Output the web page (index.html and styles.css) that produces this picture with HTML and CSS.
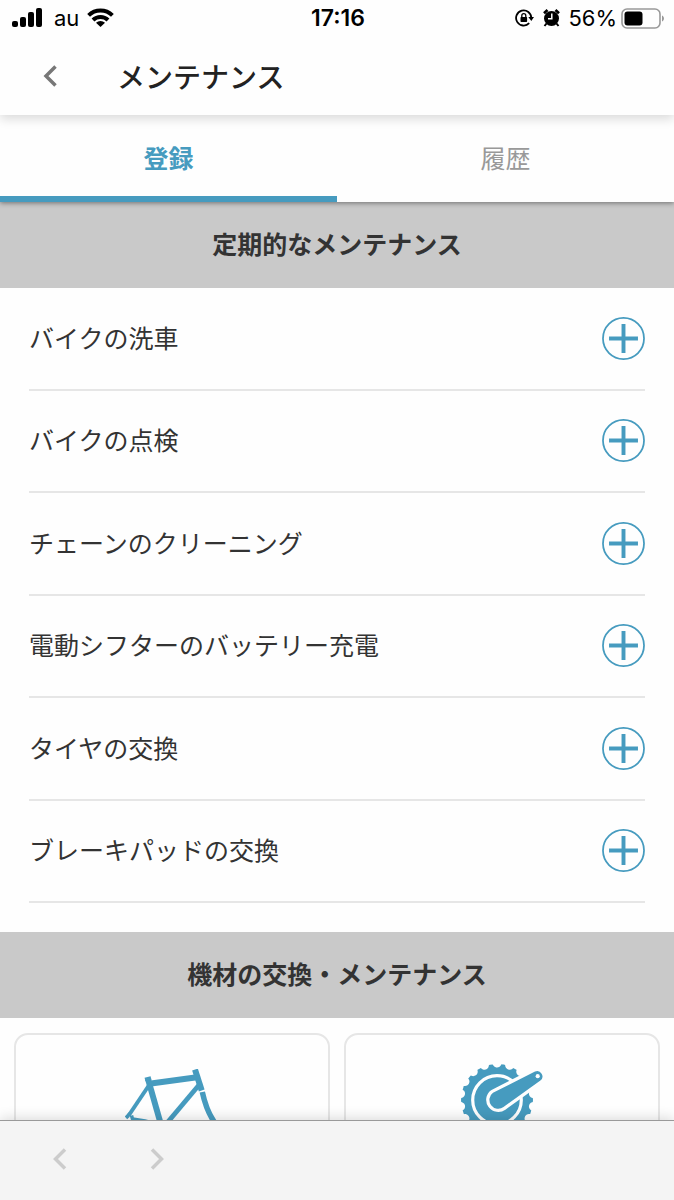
FILE: index.html
```html
<!DOCTYPE html>
<html lang="ja">
<head>
<meta charset="utf-8">
<meta name="viewport" content="width=device-width, initial-scale=1">
<title>メンテナンス</title>
<link rel="stylesheet" href="styles.css">
</head>
<body>
<div class="app">
  <header class="header">
    <div class="status">
      <div class="status-left">
        <svg width="30" height="20" viewBox="0 0 30 20" aria-hidden="true"><rect x="0" y="13" width="6" height="6" rx="2"/><rect x="8" y="9" width="6" height="10" rx="2"/><rect x="16" y="4" width="6" height="15" rx="2"/><rect x="24" y="0" width="6" height="19" rx="2"/></svg>
        <span>au</span>
        <svg width="27" height="20" viewBox="0 0 27 20" aria-hidden="true"><g fill="none" stroke="#000" stroke-width="4"><path d="M1.600 7.400a17 17 0 0 1 23.800 0"/><path d="M6 12a10.700 10.700 0 0 1 15 0"/></g><path d="M13.500 19 9 14.700a6.500 6.500 0 0 1 9 0z"/></svg>
      </div>
      <time class="clock">17:16</time>
      <div class="status-right">
        <svg class="lock" width="19" height="18" viewBox="0 0 19 18" aria-hidden="true"><path d="M14.200 14.200A7.600 7.600 0 1 1 16.300 9" fill="none" stroke="#000" stroke-width="1.800"/><path d="M13.300 8h5.700l-2.700 4z"/><rect x="5.500" y="8" width="6.600" height="5" rx=".7"/><path d="M6.800 8.500V6.700a2 2 0 0 1 4 0v1.800" fill="none" stroke="#000" stroke-width="1.300"/></svg>
        <svg class="alarm" width="17" height="18" viewBox="0 0 17 18" aria-hidden="true"><circle cx="8.500" cy="9.500" r="7.500"/><path d="M1 4.300 4.500 1M16 4.300 12.500 1" stroke="#000" stroke-width="2.600"/><path d="m3.500 14.500-2 2.500m12-2.500 2 2.500" stroke="#000" stroke-width="2"/><path d="M8.800 4.500v5.300H5" fill="none" stroke="#fff" stroke-width="1.500"/></svg>
        <span>56%</span>
        <svg width="43" height="21" viewBox="0 0 43 21" aria-hidden="true"><rect x="1" y="1" width="38" height="19" rx="5" fill="none" stroke="#999" stroke-width="1.600"/><rect x="3.500" y="3.500" width="18" height="14" rx="3"/><path d="M41 7.500c2.600 1 2.600 5 0 6z" fill="#999"/></svg>
      </div>
    </div>
    <div class="titlebar">
      <button class="back" aria-label="戻る"><svg width="14" height="22" viewBox="0 0 14 22" aria-hidden="true"><path d="M12.500 1.500 3 11l9.500 9.500" fill="none" stroke="currentColor" stroke-width="3.500"/></svg></button>
      <h1>メンテナンス</h1>
    </div>
  </header>
  <nav class="tabs" role="tablist">
    <button class="tab active" role="tab" aria-selected="true">登録</button>
    <button class="tab" role="tab" aria-selected="false">履歴</button>
  </nav>
  <main class="content">
    <h2 class="section">定期的なメンテナンス</h2>
    <ul class="list">
      <li><span id="r1">バイクの洗車</span><button class="add" aria-label="追加" aria-describedby="r1"><svg viewBox="0 0 44 44" aria-hidden="true"><use href="#plus"/></svg></button></li>
      <li><span id="r2">バイクの点検</span><button class="add" aria-label="追加" aria-describedby="r2"><svg viewBox="0 0 44 44" aria-hidden="true"><use href="#plus"/></svg></button></li>
      <li><span id="r3">チェーンのクリーニング</span><button class="add" aria-label="追加" aria-describedby="r3"><svg viewBox="0 0 44 44" aria-hidden="true"><use href="#plus"/></svg></button></li>
      <li><span id="r4">電動シフターのバッテリー充電</span><button class="add" aria-label="追加" aria-describedby="r4"><svg viewBox="0 0 44 44" aria-hidden="true"><use href="#plus"/></svg></button></li>
      <li><span id="r5">タイヤの交換</span><button class="add" aria-label="追加" aria-describedby="r5"><svg viewBox="0 0 44 44" aria-hidden="true"><use href="#plus"/></svg></button></li>
      <li><span id="r6">ブレーキパッドの交換</span><button class="add" aria-label="追加" aria-describedby="r6"><svg viewBox="0 0 44 44" aria-hidden="true"><use href="#plus"/></svg></button></li>
    </ul>
    <h2 class="section">機材の交換・メンテナンス</h2>
    <div class="cards">
      <button class="card" aria-label="フレーム">
        <svg width="94" height="75" viewBox="0 0 94 75" fill="none" stroke="#469bbf" aria-hidden="true">
          <path d="M23 10 35.500 54" stroke-width="6"/>
          <path d="M20 10.500 26 9" stroke-width="3.500"/>
          <path d="M26 14.500 72 8.200" stroke-width="6"/>
          <path d="M70 .500 76.700 21.500" stroke-width="6"/>
          <path d="M77.300 23Q81 40 88 51L91 56" stroke-width="5.500"/>
          <path d="M74 16 42 54" stroke-width="4.800"/>
          <path d="M24.500 15.500 4 46" stroke-width="4"/>
          <path d="M5 44.500 2.200 47.500 3.500 49M6.500 46.500 7.500 50 20 52 36 56" stroke-width="3.500"/>
        </svg>
      </button>
      <button class="card" aria-label="クランク">
        <svg width="82" height="75" viewBox="0 0 82 75" aria-hidden="true">
          <circle cx="36" cy="36" r="36" fill="#469bbf"/>
          <circle cx="36" cy="36" r="37" fill="none" stroke="#fefefe" stroke-width="9" stroke-linecap="round" pathLength="18" stroke-dasharray="0 1" transform="rotate(10 36 36)"/>
          <circle cx="36" cy="36" r="24.300" fill="none" stroke="#fefefe" stroke-width="3.200"/>
          <path d="M32 28.800 74 7.500a5.300 5.300 0 0 1 5.400 9L42.500 43A8.800 8.800 0 1 1 32 28.800z" fill="#469bbf" stroke="#fefefe" stroke-width="6.500" stroke-linejoin="round" paint-order="stroke"/>
          <circle cx="76.700" cy="12.200" r="2.100" fill="#fefefe"/>
        </svg>
      </button>
    </div>
  </main>
  <footer class="browserbar">
    <button aria-label="前のページ"><svg width="14" height="22" viewBox="0 0 14 22" aria-hidden="true"><path d="M12 1.500 2.500 11l9.500 9.500" fill="none" stroke="currentColor" stroke-width="3.500"/></svg></button>
    <button aria-label="次のページ"><svg width="14" height="22" viewBox="0 0 14 22" aria-hidden="true"><path d="M2 1.500 11.500 11 2 20.500" fill="none" stroke="currentColor" stroke-width="3.500"/></svg></button>
  </footer>
</div>
<svg class="defs" width="0" height="0" aria-hidden="true"><defs><g id="plus" fill="none" stroke="#469bbf"><circle cx="22" cy="22" r="21" stroke-width="1.800"/><path d="M7.200 22h29.600M22 7.200v29.600" stroke-width="4"/></g></defs></svg>
</body>
</html>
```
FILE: styles.css
```css
* { box-sizing: border-box; }

body {
  margin: 0;
  background: #fefefe;
  color: #333;
  font-family: "Noto Sans CJK JP", sans-serif;
  font-size: 25px;
}

h1, h2, ul { margin: 0; padding: 0; }

button {
  border: 0;
  padding: 0;
  background: none;
  font: inherit;
  color: inherit;
}

svg { display: block; }
.defs { position: absolute; }

.app {
  height: 100vh;
  display: flex;
  flex-direction: column;
}

.header {
  position: relative;
  z-index: 3;
  background: #fefefe;
  box-shadow: 0 4px 10px rgba(0, 0, 0, .14);
}

.status {
  display: grid;
  grid-template-columns: 1fr auto 1fr;
  align-items: center;
  height: 36px;
  padding: 0 10px 0 12px;
  color: #000;
  font-family: Inter, sans-serif;
  font-size: 22px;
}

.status-left { display: flex; align-items: center; gap: 12px; }
.status-left span + svg { margin-left: -4px; }
.status-right { display: flex; align-items: center; justify-content: flex-end; gap: 4px; }
.status-right .alarm { margin: 0 4px 0 5px; }
.clock { font-size: 23px; font-weight: 600; }

.titlebar {
  display: flex;
  align-items: center;
  height: 79px;
  padding-left: 30px;
}

.back {
  display: grid;
  place-items: center;
  width: 40px;
  height: 48px;
  margin-right: 47px;
  color: #777;
}

h1 { font-size: 28px; font-weight: 500; line-height: 40px; color: #222; }

.tabs {
  position: relative;
  z-index: 2;
  display: flex;
  background: #fefefe;
  box-shadow: 0 1px 5px rgba(0, 0, 0, .45);
}

.tab {
  flex: 1;
  height: 87px;
  padding-bottom: 4px;
  border-top: 6px solid transparent;
  border-bottom: 6px solid transparent;
  color: #999;
}

.tab.active { border-bottom-color: #469bbf; color: #469bbf; font-weight: 700; }

.content {
  flex: 1;
  min-height: 0;
  overflow-y: auto;
  scrollbar-width: none;
}

.section {
  padding: 21px 16px 25px;
  background: #c9c9c9;
  font-size: 25px;
  font-weight: 700;
  line-height: 40px;
  text-align: center;
}

.list {
  display: grid;
  grid-auto-rows: 1fr;
  min-height: 615px;
  margin: 0 29px 29px;
  list-style: none;
}

.list li {
  display: flex;
  align-items: center;
  justify-content: space-between;
  border-bottom: 2px solid #e6e6e6;
}

.list span { padding-bottom: 3px; }

.add { width: 43px; height: 43px; flex: none; }

.cards {
  display: grid;
  grid-template-columns: 1fr 1fr;
  gap: 14px;
  padding: 15px 14px 30px;
}

.card {
  display: flex;
  justify-content: center;
  height: 180px;
  padding-top: 29px;
  border: 2px solid #e6e6e6;
  border-radius: 14px;
}

.card:first-child { padding-top: 34px; }

.browserbar {
  position: relative;
  z-index: 2;
  display: flex;
  gap: 57px;
  height: 80px;
  padding-left: 40px;
  padding-bottom: 3px;
  border-top: 1px solid #999;
  background: #f4f4f4;
  color: #ccc;
  box-shadow: 0 -2px 12px rgba(0, 0, 0, .14);
}

.browserbar button { display: grid; place-items: center; width: 40px; }
```
